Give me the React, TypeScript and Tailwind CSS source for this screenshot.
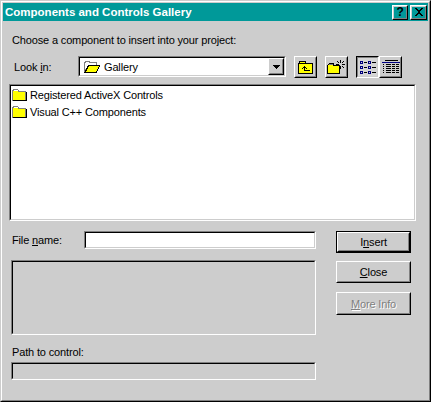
import type { ReactNode } from "react";

function Sunken({ className, children }: { className: string; children?: ReactNode }) {
  return (
    <div className={`border border-t-[#808080] border-l-[#808080] border-r-white border-b-white ${className}`}>
      <div className="h-full w-full border border-t-black border-l-black border-r-[#cdcdcd] border-b-[#cdcdcd]">
        {children}
      </div>
    </div>
  );
}

function Raised({ className, children }: { className: string; children?: ReactNode }) {
  return (
    <div className={`border border-t-white border-l-white border-r-black border-b-black ${className}`}>
      <div className="flex h-full w-full items-center justify-center border border-t-[#cdcdcd] border-l-[#cdcdcd] border-r-[#808080] border-b-[#808080]">
        {children}
      </div>
    </div>
  );
}

function FolderIcon() {
  return (
    <svg width="15" height="12" viewBox="0 0 15 12" shapeRendering="crispEdges">
      <path d="M.5 11.5V1.5H1.5V.5H5.5V1.5H6.5V2.5H13.5V11.5Z" fill="#ffff00" stroke="#808080" />
      <path d="M14.5 3V11.5H1" fill="none" stroke="#000" />
      <path d="M1 2H6V1H2V2Z" fill="#fff" />
    </svg>
  );
}

function OpenFolderIcon() {
  return (
    <svg width="16" height="12" viewBox="0 0 16 12" shapeRendering="crispEdges">
      <path d="M.5 11V1.5H1.5V.5H5.5V1.5H12.5V4.5H4.5L.5 11Z" fill="#fff" stroke="#808080" />
      <path d="M1 11.5L4.5 4.5H15.5L12.5 11.5Z" fill="#ffff00" stroke="#000" />
    </svg>
  );
}

function UpFolderIcon() {
  return (
    <svg width="15" height="13" viewBox="0 0 15 13" shapeRendering="crispEdges">
      <path d="M1 0H8V2H15V13H0V2H1Z" fill="#000" />
      <path d="M2 1H7V2H2Z" fill="#ffff00" />
      <path d="M1 3H14V12H1Z" fill="#ffff00" />
      <path d="M6 5H7V9H12V10H6ZM5 6H8V7H5ZM4 7H5V8H4ZM8 7H9V8H8Z" fill="#000" />
    </svg>
  );
}

function NewFolderIcon() {
  return (
    <svg width="19" height="14" viewBox="0 0 19 14" shapeRendering="crispEdges">
      <path d="M.5 5.5L2.5 3.5H6.5V5.5H12.5V13.5H.5Z" fill="#ffff00" stroke="#000" />
      <path d="M1 5H6V4H3Z" fill="#808080" />
      <path d="M13 0H14V3H13ZM13 6H14V9H13ZM15 4H18V5H15ZM9 4H12V5H9ZM10 1H11V2H10ZM16 1H17V2H16ZM16 7H17V8H16ZM11 2H12V3H11ZM15 2H16V3H15ZM15 6H16V7H15Z" fill="#000" />
    </svg>
  );
}

function ListIcon() {
  const ys = [0, 5, 10];
  return (
    <svg width="16" height="13" viewBox="0 0 16 13" shapeRendering="crispEdges">
      {ys.map((y) => (
        <g key={y}>
          <path d={`M0 ${y}H3V${y + 3}H0ZM1 ${y + 1}V${y + 2}H2V${y + 1}Z`} fill="#000080" fillRule="evenodd" />
          <path d={`M8 ${y}H11V${y + 3}H8ZM9 ${y + 1}V${y + 2}H10V${y + 1}Z`} fill="#000080" fillRule="evenodd" />
          <path d={`M4 ${y + 1}H7V${y + 2}H4Z`} fill="#000" />
          <path d={`M12 ${y + 1}H16V${y + 2}H12Z`} fill="#000" />
        </g>
      ))}
    </svg>
  );
}

function DetailsIcon() {
  const ys = [4, 6, 8, 10, 12];
  return (
    <svg width="18" height="14" viewBox="0 0 18 14" shapeRendering="crispEdges">
      <path d="M3 0H16V1H3Z" fill="#000" />
      <path d="M0 2H18V3H0Z" fill="#000080" />
      {ys.map((y) => (
        <g key={y}>
          <path d={`M1 ${y}H2V${y + 1}H1Z`} fill="#000" />
          <path d={`M4 ${y}H9V${y + 1}H4Z`} fill="#000" />
          <path d={`M10 ${y}H13V${y + 1}H10Z`} fill="#000" />
          <path d={`M14 ${y}H17V${y + 1}H14Z`} fill="#000" />
        </g>
      ))}
    </svg>
  );
}

function ListRow({ label }: { label: string }) {
  return (
    <div className="flex h-[17px] items-center gap-[3px] pl-px">
      <FolderIcon />
      <span>{label}</span>
    </div>
  );
}

export default function App() {
  return (
    <div className="h-[402px] w-[431px] overflow-hidden bg-[#cdcdcd] font-['Liberation_Sans',sans-serif] text-[11px] leading-[14px] tracking-[-0.15px] text-black">
      <div className="h-full w-full border border-t-[#cdcdcd] border-l-[#cdcdcd] border-r-black border-b-black">
        <div className="h-full w-full border border-t-white border-l-white border-r-[#808080] border-b-[#808080] p-px">
          {/* title bar */}
          <div className="flex h-[18px] items-center justify-between bg-[#009999] pr-px pl-0.5">
            <span className="text-[11.5px] font-bold tracking-normal text-white">Components and Controls Gallery</span>
            <div className="flex gap-0.5">
              <Raised className="h-[15px] w-[16px]">
                <span className="text-[12px] leading-none font-bold">?</span>
              </Raised>
              <Raised className="h-[15px] w-[17px]">
                <svg width="10" height="8" viewBox="0 0 10 8" shapeRendering="crispEdges">
                  <path d="M1 0H3L5 2.5L7 0H9L6 4L9 8H7L5 5.5L3 8H1L4 4Z" fill="#000" />
                </svg>
              </Raised>
            </div>
          </div>

          <div className="flex flex-col pl-1.5">
            <p className="mt-[12px] pl-[3px]">Choose a component to insert into your project:</p>

            {/* look in row */}
            <div className="mt-[9px] flex h-[22px] items-start">
              <label className="mt-1 w-[69px] pl-[5px]">
                Look <span className="underline">i</span>n:
              </label>
              <Sunken className="h-[21px] w-[208px] bg-white">
                <div className="flex h-full items-center">
                  <div className="ml-1 flex flex-1 items-center gap-1">
                    <OpenFolderIcon />
                    <span>Gallery</span>
                  </div>
                  <Raised className="h-[17px] w-[16px] shrink-0 bg-[#cdcdcd]">
                    <svg width="7" height="4" viewBox="0 0 7 4" shapeRendering="crispEdges">
                      <path d="M0 0H7L3.5 4Z" fill="#000" />
                    </svg>
                  </Raised>
                </div>
              </Sunken>
              <Raised className="ml-[8px] h-[22px] w-[23px]"><UpFolderIcon /></Raised>
              <Raised className="ml-[8px] h-[22px] w-[23px]"><NewFolderIcon /></Raised>
              <div className="ml-[8px] h-[22px] w-[23px] border border-t-black border-l-black border-r-white border-b-white">
                <div className="flex h-full w-full items-center justify-center border border-t-[#808080] border-l-[#808080] border-r-[#cdcdcd] border-b-[#cdcdcd] bg-[#d6d6d6]">
                  <ListIcon />
                </div>
              </div>
              <Raised className="h-[22px] w-[23px]"><DetailsIcon /></Raised>
            </div>

            {/* file list */}
            <Sunken className="mt-1.5 h-[137px] w-[407px] bg-white">
              <ListRow label="Registered ActiveX Controls" />
              <ListRow label="Visual C++ Components" />
            </Sunken>

            <div className="mt-[10px] flex">
              <div className="w-[307px]">
                <div className="flex h-[18px] items-center">
                  <label className="w-[75px] pl-[3px]">
                    File <span className="underline">n</span>ame:
                  </label>
                  <Sunken className="h-[18px] w-[232px] bg-white" />
                </div>
                <Sunken className="mt-[11px] ml-[2px] h-[75px] w-[305px]" />
                <p className="mt-[10px] ml-[3px]">Path to control:</p>
                <Sunken className="mt-[3px] ml-[2px] h-[18px] w-[305px]" />
              </div>

              {/* action buttons */}
              <div className="ml-[20px] flex w-[75px] flex-col">
                <div className="h-[22px] border border-black">
                  <Raised className="h-full w-full">
                    <span>I<span className="underline">n</span>sert</span>
                  </Raised>
                </div>
                <Raised className="mt-2 h-[22px] w-full">
                  <span><span className="underline">C</span>lose</span>
                </Raised>
                <Raised className="mt-[9px] h-[23px] w-full">
                  <span className="text-[#808080] [text-shadow:1px_1px_0_#fff]">
                    <span className="underline">M</span>ore Info
                  </span>
                </Raised>
              </div>
            </div>
          </div>
        </div>
      </div>
    </div>
  );
}
